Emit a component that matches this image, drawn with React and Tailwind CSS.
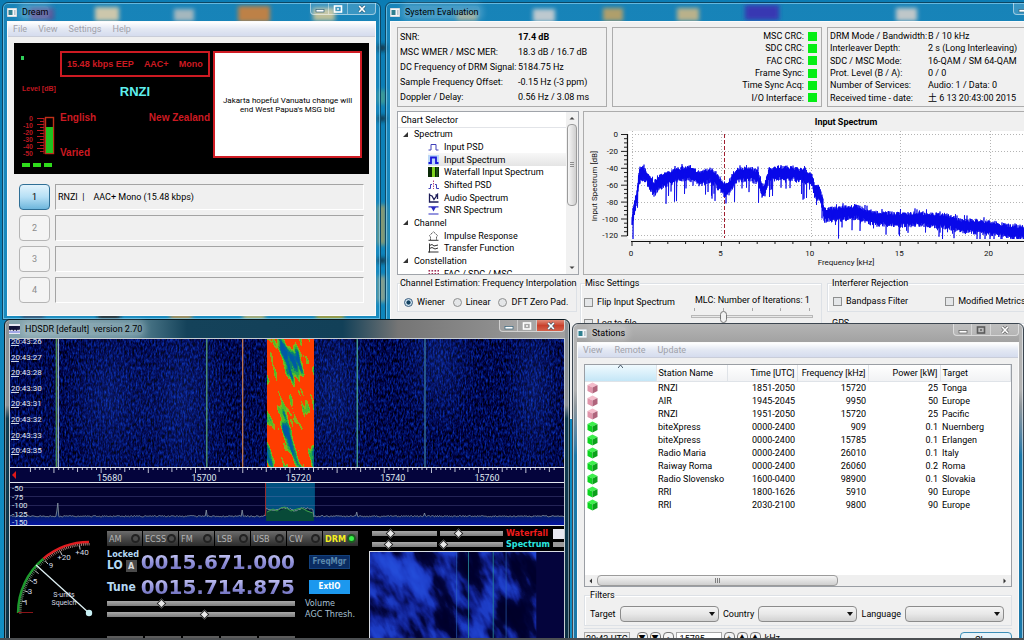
import React from "react";
import clsx from "clsx";

// small seeded generator so the traces look the same on every load
const makeRandom = (seed) => {
  let s = seed;
  return () => {
    s = (s * 16807) % 2147483647;
    return s / 2147483647;
  };
};

/* ---------- shared window parts ---------- */

const AppIcon = () => (
  <svg viewBox="0 0 10 9" className="h-[9px] w-[10px] shrink-0" aria-hidden="true">
    <rect width="10" height="9" fill="#f4f6f8" stroke="#8a9aa5" strokeWidth="0.6" />
    <rect x="1.5" y="2" width="4" height="5" fill="#2f7f8f" />
    <rect x="7" y="2" width="1.6" height="5" fill="#b9c4cc" />
  </svg>
);

const HdsdrIcon = () => (
  <svg viewBox="0 0 11 10" className="h-[10px] w-[11px] shrink-0" aria-hidden="true">
    <rect width="11" height="10" fill="#e8e8f4" />
    <path d="M0 2H11V5L10 6.5L9 5.5L7.5 7L6 5.5L4.5 7L3 5.5L1.5 6.5L0 5.5Z" fill="#12123a" />
    <rect y="7.5" width="11" height="1" fill="#5a64d8" />
  </svg>
);

const CaptionButtons = ({ tone = "light", red }) => {
  const stroke = tone === "light" ? "#ffffff" : "#5b5b5b";
  const cell = "flex h-[11px] items-center justify-center border-r border-white/40 last:border-r-0";
  return (
    <div className="flex shrink-0 overflow-hidden rounded-b border border-t-0 border-white/50 bg-white/15">
      <button aria-label="Minimize" className={clsx(cell, "w-[18px]")}>
        <svg viewBox="0 0 10 8" className="h-2 w-2.5">
          <rect x="1" y="4.5" width="8" height="2.5" fill="#fff" stroke={tone === "light" ? "#33617a" : stroke} strokeWidth="0.7" />
        </svg>
      </button>
      <button aria-label="Maximize" className={clsx(cell, "w-[19px]")}>
        <svg viewBox="0 0 10 8" className="h-2 w-2.5">
          <rect x="1.5" y="1" width="7" height="6" fill="none" stroke={stroke} strokeWidth="1.6" />
          <rect x="4" y="3.3" width="2" height="1.4" fill={stroke} />
        </svg>
      </button>
      <button
        aria-label="Close"
        className={clsx(cell, "w-[27px]", red && "bg-gradient-to-b from-[#e08a78] via-[#c8402c] to-[#d4604a]")}
      >
        <svg viewBox="0 0 10 8" className="h-2 w-2.5">
          <path d="M2.2 1 L7.8 7 M7.8 1 L2.2 7" stroke={tone === "light" ? "#33617a" : stroke} strokeWidth="2.8" />
          <path d="M2.2 1 L7.8 7 M7.8 1 L2.2 7" stroke="#fff" strokeWidth="1.7" />
        </svg>
      </button>
    </div>
  );
};

const TitleBar = ({ icon, title, tone, red }) => (
  <div className="flex h-[18px] shrink-0 items-start justify-between">
    <div className="flex h-full items-center gap-[4px] text-[9px] text-black">
      {icon}
      <span className="whitespace-pre rounded bg-white/20 px-px shadow-[0_0_6px_3px_rgba(255,255,255,0.2)]">{title}</span>
    </div>
    <CaptionButtons tone={tone} red={red} />
  </div>
);

const MenuBar = ({ items, className }) => (
  <nav className={clsx("flex h-[15px] items-center border-b border-[#c9cdd9] bg-gradient-to-b from-white via-[#e3e8f3] to-[#d5dcee] pl-[5px] text-[#a0a2aa]", className)}>
    {items.map((item) => (
      <button key={item}>{item}</button>
    ))}
  </nav>
);

/* ---------- desktop ---------- */

const wallpaperIcons = [
  [30, 8, 24, 12, "#3b3f8a"], [95, 7, 24, 14, "#c9c4a8"], [174, 9, 20, 12, "#9fb3bb"],
  [238, 6, 32, 16, "#b97a3c"], [313, 8, 22, 13, "#b9bc94"], [457, 12, 20, 9, "#7f9a8c"],
  [533, 9, 22, 13, "#b9c6cc"], [603, 8, 20, 13, "#ab9a63"], [677, 8, 22, 13, "#b5ad85"],
  [745, 5, 34, 15, "#2e2fae"], [896, 8, 21, 13, "#bcc4c6"],
  [22, 314, 22, 6, "#2a4a6a"], [98, 314, 22, 6, "#141414"], [170, 314, 22, 6, "#b08a48"],
  [243, 314, 22, 6, "#b9b06a"], [316, 314, 28, 6, "#a89a2c"],
  [378, 45, 8, 6, "#17323f"], [378, 90, 8, 14, "#3f9a95"], [378, 116, 8, 5, "#17323f"],
  [378, 205, 8, 40, "#8b9a70"], [378, 258, 8, 5, "#17323f"], [378, 276, 8, 26, "#8aa08c"],
];

const Wallpaper = () => (
  <svg className="absolute inset-0 h-full w-full" aria-hidden="true">
    <defs>
      <filter id="soft"><feGaussianBlur stdDeviation="2" /></filter>
    </defs>
    <g filter="url(#soft)">
      {wallpaperIcons.map(([x, y, w, h, fill]) => (
        <rect key={`${x}-${y}`} x={x} y={y} width={w} height={h} fill={fill} />
      ))}
    </g>
  </svg>
);

/* ---------- Dream ---------- */

const LevelMeter = () => (
  <svg viewBox="0 0 46 131" className="h-[131px] w-[46px] shrink-0" aria-label="Level">
    <rect x="7" y="13" width="3" height="4" fill="#2fd05a" />
    <text x="8" y="48" fontSize="7" fontWeight="700" fill="#c01820">Level [dB]</text>
    {[0, -10, -20, -30, -40, -50].map((v, i) => (
      <text key={v} x="19" y={78 + i * 7} fontSize="7" textAnchor="end" fill="#b81820">{v}</text>
    ))}
    {Array.from({ length: 12 }, (_, i) => (
      <path key={i} d={`M${i % 2 ? 26 : 23} ${75.5 + i * 3}H30`} stroke="#b81820" />
    ))}
    <path d="M30 75V111" stroke="#b81820" />
    <rect x="31.5" y="74.5" width="8" height="36" fill="none" stroke="#c03018" strokeWidth="1.4" />
    <rect x="32" y="84" width="7" height="26" fill="#1fc01f" />
    {[8, 19, 30].map((x) => (
      <rect key={x} x={x} y="120" width="8" height="4" fill="#2fdc1c" />
    ))}
  </svg>
);

const services = ["RNZI  |    AAC+ Mono (15.48 kbps)", "", "", ""];

const DreamWindow = () => (
  <section className="absolute top-[2px] left-[2px] w-[379px] rounded-t-md border border-[#0d4663] bg-white/5 px-[4px] pb-[3px] shadow-[inset_0_0_0_1px_rgba(150,220,250,0.6)]">
    <TitleBar icon={<AppIcon />} title="Dream" />
    <div className="border border-white/70 bg-[#f0f0f0]">
      <MenuBar items={["File", "View", "Settings", "Help"]} className="gap-[11px]" />
      <div className="px-[6px] pt-[6px] pb-[12px]">
        <div className="flex h-[131px] bg-black font-bold text-[#cc1a22] [font-family:'Liberation_Sans',Arial,sans-serif]">
          <LevelMeter />
          <div className="flex w-[150px] flex-col pt-2 text-[10px]">
            <div className="flex h-[26px] items-center justify-around border-2 border-[#cc1a22] text-[9px] whitespace-nowrap">
              <span>15.48 kbps EEP</span>
              <span>AAC+</span>
              <span>Mono</span>
            </div>
            <h1 className="text-center text-[13px] leading-[30px] text-[#5ff0ee]">RNZI</h1>
            <div className="flex justify-between leading-[22px]">
              <span>English</span>
              <span>New Zealand</span>
            </div>
            <span className="mt-[18px] leading-3">Varied</span>
          </div>
          <div className="my-2 ml-[3px] flex h-[107px] w-[149px] items-center justify-center border-2 border-[#d01c24] bg-white text-center text-[8px] leading-[9px] font-normal whitespace-nowrap text-black [font-family:Roboto,sans-serif]">
            <p>
              Jakarta hopeful Vanuatu change will
              <br />
              end West Papua's MSG bid
            </p>
          </div>
        </div>
        <ul className="mt-[10px] flex flex-col gap-[5px] pr-[5px] pl-[5px]">
          {services.map((text, i) => (
            <li key={i} className="flex h-[26px] gap-[5px]">
              <button
                className={clsx(
                  "w-[31px] rounded-sm border",
                  i === 0
                    ? "border-[#2f6f96] bg-gradient-to-b from-[#e2f3fc] via-[#b5dff5] to-[#6db6dc] text-black"
                    : "border-[#b5b5b5] bg-[#f4f4f4] text-[#8c8c8c]"
                )}
              >
                {i + 1}
              </button>
              <div className="flex flex-1 items-center border border-t-[#a4a4a4] border-r-white border-b-white border-l-[#a4a4a4] pl-[2px] whitespace-pre text-black">
                {text}
              </div>
            </li>
          ))}
        </ul>
      </div>
    </div>
  </section>
);

/* ---------- System Evaluation ---------- */

const signalStats = [
  ["SNR:", "17.4 dB"],
  ["MSC WMER / MSC MER:", "18.3 dB / 16.7 dB"],
  ["DC Frequency of DRM Signal:", "5184.75 Hz"],
  ["Sample Frequency Offset:", "-0.15 Hz (-3 ppm)"],
  ["Doppler / Delay:", "0.56 Hz / 3.08 ms"],
];
const leds = ["MSC CRC:", "SDC CRC:", "FAC CRC:", "Frame Sync:", "Time Sync Acq:", "I/O Interface:"];
const modeStats = [
  ["DRM Mode / Bandwidth:", "B / 10 kHz"],
  ["Interleaver Depth:", "2 s (Long Interleaving)"],
  ["SDC / MSC Mode:", "16-QAM / SM 64-QAM"],
  ["Prot. Level (B / A):", "0 / 0"],
  ["Number of Services:", "Audio: 1 / Data: 0"],
  ["Received time - date:", "土 6 13 20:43:00 2015"],
];

const treeIcons = {
  psd: <path d="M0.5 8H3V2.5H8V8H10.5" fill="none" stroke="#4040b8" strokeWidth="1" />,
  spectrum: (
    <>
      <rect width="11" height="10" fill="#bcd8f8" />
      <path d="M0.5 8H3V2.5H8V8H10.5" fill="none" stroke="#1818d8" strokeWidth="1.8" />
    </>
  ),
  waterfall: (
    <>
      <rect width="11" height="10" fill="#0a2a08" />
      <rect x="4" width="3" height="10" fill="#7fd420" />
      <rect x="8.5" width="1" height="10" fill="#2c7a18" />
    </>
  ),
  shifted: (
    <>
      <path d="M0.5 8.5H2.5V4.5H4M7 4.5H8.5V8.5H11" fill="none" stroke="#4040b8" />
      <path d="M5.5 0.5V9" stroke="#b04080" strokeDasharray="1.5 1" />
    </>
  ),
  audio: <path d="M1.5 0.5V9H10.5M1.5 2L4 3L6 6.5L9.5 1.5V6M7.5 2H9.5" fill="none" stroke="#1c1c58" strokeWidth="1.3" />,
  snr: (
    <>
      <path d="M0.5 1.8H10.5M0.5 9H10.5" stroke="#2c2cc0" strokeWidth="1.2" />
      <path d="M3 2L5.5 6.5L8 2Z" fill="#2c2cc0" />
    </>
  ),
  impulse: (
    <>
      <path d="M0.5 9.3H10.5" stroke="#333" />
      <path d="M2.5 9V6L1.5 4.5L5.5 0.8L9.5 4.5L8.5 6V9" fill="none" stroke="#555" strokeDasharray="1.6 0.6" />
    </>
  ),
  transfer: <path d="M1.5 0.5V9.5M0 9H10.5M1.5 2.5L4 1.5L6 3L10 2M1.5 5.5L4 4.5L7 6L10 5" fill="none" stroke="#333" />,
  msc: (
    <g fill="#a03058">
      {[0, 3, 6, 9].map((x) => [0, 3, 6].map((y) => <rect key={`${x}${y}`} x={x + 0.5} y={y + 1} width="1.6" height="1.6" />))}
    </g>
  ),
};

const tree = [
  { label: "Spectrum" },
  { label: "Input PSD", icon: "psd" },
  { label: "Input Spectrum", icon: "spectrum", selected: true },
  { label: "Waterfall Input Spectrum", icon: "waterfall" },
  { label: "Shifted PSD", icon: "shifted" },
  { label: "Audio Spectrum", icon: "audio" },
  { label: "SNR Spectrum", icon: "snr" },
  { label: "Channel" },
  { label: "Impulse Response", icon: "impulse" },
  { label: "Transfer Function", icon: "transfer" },
  { label: "Constellation" },
  { label: "FAC / SDC / MSC", icon: "msc" },
];

const ChartSelector = () => (
  <div className="flex w-[182px] shrink-0 overflow-hidden border border-[#a0a4aa] bg-white">
    <div className="min-w-0 flex-1">
      <h2 className="h-[16px] border-b border-[#e2e4e8] pl-[3px] leading-[16px]">Chart Selector</h2>
      <ul className="grid h-[152px] grid-rows-12">
        {tree.map(({ label, icon, selected }) =>
          icon ? (
            <li key={label} className="pl-[30px]">
              <button className={clsx("flex h-full w-full items-center gap-[5px] whitespace-nowrap", selected && "bg-gradient-to-b from-[#f8f8f8] to-[#e4e4e4]")}>
                <svg viewBox="0 0 11 10" className="h-[10px] w-[11px] shrink-0">{treeIcons[icon]}</svg>
                {label}
              </button>
            </li>
          ) : (
            <li key={label} className="flex items-center gap-[6px] pl-[5px]">
              <svg viewBox="0 0 5 5" className="h-[5px] w-[5px]"><path d="M5 0V5H0Z" fill="#333" /></svg>
              {label}
            </li>
          )
        )}
      </ul>
    </div>
    <div className="flex w-[12px] flex-col items-center bg-[#f1f1f1]">
      <svg viewBox="0 0 12 12" className="h-3 w-3"><path d="M3.5 7.5L6 5L8.5 7.5Z" fill="#444" /></svg>
      <div className="flex h-[82px] w-[10px] items-center justify-center rounded-sm border border-[#9b9b9b] bg-gradient-to-r from-[#f6f6f6] to-[#cfcfcf]">
        <svg viewBox="0 0 6 6" className="h-1.5 w-1.5"><path d="M1 0.5H5M1 2.5H5M1 4.5H5" stroke="#777" strokeWidth="0.8" /></svg>
      </div>
      <svg viewBox="0 0 12 12" className="mt-auto h-3 w-3"><path d="M3.5 4.5L6 7L8.5 4.5Z" fill="#444" /></svg>
    </div>
  </div>
);

// [x, y] centre line of the spectrum in chart pixels
const envelope = [
  [48, 108], [50, 98], [53, 84], [55, 64], [58, 60], [62, 63], [66, 71], [70, 76], [76, 69], [84, 66], [92, 62],
  [104, 60], [116, 66], [126, 62], [132, 66], [138, 74], [141, 77], [146, 73], [152, 63], [165, 61], [174, 64],
  [178, 78], [181, 77], [185, 62], [196, 60], [210, 61], [222, 64], [228, 66], [231, 80], [235, 80], [238, 88],
  [240, 102], [256, 101], [272, 99], [287, 105], [316, 107], [337, 106], [365, 109], [376, 113], [396, 114],
  [412, 116], [428, 119], [442, 120], [462, 121],
];

const spectrumPath = (() => {
  const rand = makeRandom(77);
  let d = "";
  let k = 0;
  for (let x = 48; x < 460; x += 0.5) {
    while (k < envelope.length - 2 && envelope[k + 1][0] < x) k += 1;
    const [x0, y0] = envelope[k];
    const [x1, y1] = envelope[k + 1];
    const mid = y0 + ((y1 - y0) * (x - x0)) / (x1 - x0);
    const up = mid - 3 - rand() * 4 - (rand() > 0.93 ? 3 : 0);
    const down = mid + 4 + rand() * 5 + (rand() > 0.9 ? rand() * 20 : 0);
    d += `${d ? "L" : "M"}${x} ${up.toFixed(1)}L${x} ${Math.min(down, 127).toFixed(1)}`;
  }
  return d;
})();

const InputSpectrumChart = () => (
  <svg viewBox="0 0 460 162" className="h-[162px] w-[460px] [font-family:Roboto,sans-serif]">
    <rect x="44" y="19" width="416" height="108" fill="#fff" />
    <g stroke="#b4b4b4" strokeDasharray="1 2">
      {Array.from({ length: 7 }, (_, i) => <path key={i} d={`M48 ${Math.round(22 + i * 16.9) + 0.5}H460`} />)}
      {Array.from({ length: 5 }, (_, i) => <path key={i} d={`M${Math.round(48 + i * 89.4) + 0.5} 19V127`} />)}
    </g>
    <path d="M140.500 22V126" stroke="#a02030" strokeDasharray="4 2" />
    <path d={spectrumPath} fill="none" stroke="#0808e8" strokeWidth="0.8" />
    <path d="M43.500 22V124M47 129.500H460" stroke="#111" strokeWidth="1.2" fill="none" />
    <g stroke="#222">
      {Array.from({ length: 25 }, (_, i) => (
        <path key={i} d={`M${i % 4 === 0 ? 37 : 40} ${(22.5 + i * 4.225).toFixed(1)}H43`} />
      ))}
      {Array.from({ length: 23 }, (_, i) => (
        <path key={i} d={`M${(48 + i * 17.88).toFixed(1)} 130V${i % 5 === 0 ? 134 : 132}`} />
      ))}
    </g>
    <g fontSize="8" fill="#111">
      {[0, -20, -40, -60, -80, -100, -120].map((v, i) => (
        <text key={v} x="34" y={25 + i * 16.9} textAnchor="end">{v}</text>
      ))}
      {[0, 5, 10, 15, 20].map((v, i) => (
        <text key={v} x={47 + i * 89.4} y="144" textAnchor="middle">{v}</text>
      ))}
      <text x="262" y="153" textAnchor="middle">Frequency [kHz]</text>
      <text transform="translate(13 74) rotate(-90)" textAnchor="middle">Input Spectrum [dB]</text>
    </g>
    <text x="262" y="13" fontSize="9" fontWeight="700" textAnchor="middle">Input Spectrum</text>
  </svg>
);

const checkBox = "h-[9px] w-[9px] appearance-none border border-[#8e8f8f] bg-[#e4e6e8]";
const Check = ({ label, className }) => (
  <label className={clsx("flex items-center gap-[4px] whitespace-nowrap", className)}>
    <input type="checkbox" className={checkBox} />
    {label}
  </label>
);

const group = "min-w-0 border border-[#dde1e6] shadow-[inset_1px_1px_0_white]";
const panel = "shrink-0 border border-[#acacac]";

const SystemEvaluationWindow = () => (
  <section className="absolute top-[2px] -right-[60px] left-[385px] h-[400px] rounded-t-md border border-[#0d4663] bg-white/5 px-[4px] shadow-[inset_0_0_0_1px_rgba(150,220,250,0.6)]">
    <TitleBar icon={<AppIcon />} title="System Evaluation" />
    <div className="h-full border border-white/70 bg-[#f0f0f0] pt-[5px] pl-[6px] text-black">
      <div className="flex h-[80px] gap-[5px]">
        <dl className={clsx(panel, "grid w-[210px] grid-cols-[118px_1fr] grid-rows-5 items-center px-[2px] py-px whitespace-nowrap")}>
          {signalStats.map(([name, value], i) => (
            <React.Fragment key={name}>
              <dt>{name}</dt>
              <dd className={clsx(i === 0 && "font-bold")}>{value}</dd>
            </React.Fragment>
          ))}
        </dl>
        <ul className={clsx(panel, "grid w-[210px] grid-rows-6 px-[4px] py-[2px] text-right")}>
          {leds.map((name) => (
            <li key={name} className="flex items-center justify-end gap-[4px]">
              {name}
              <span className="h-[9px] w-[9px] bg-[#04ee14]" />
            </li>
          ))}
        </ul>
        <dl className={clsx(panel, "grid w-[240px] grid-cols-[98px_1fr] grid-rows-6 items-center px-[2px] py-[2px] whitespace-nowrap")}>
          {modeStats.map(([name, value]) => (
            <React.Fragment key={name}>
              <dt>{name}</dt>
              <dd>{value}</dd>
            </React.Fragment>
          ))}
        </dl>
      </div>
      <div className="mt-[4px] flex h-[164px] gap-[4px]">
        <ChartSelector />
        <div className="min-w-0 flex-1 overflow-hidden border border-r-0 border-[#acacac]">
          <InputSpectrumChart />
        </div>
      </div>
      <div className="mt-[2px] flex items-start gap-[3px]">
        <fieldset className={clsx(group, "h-[35px] w-[180px]")}>
          <legend className="ml-[2px] leading-3 whitespace-nowrap">Channel Estimation: Frequency Interpolation</legend>
          <div className="flex items-center gap-[8px] pt-[7px] pl-[6px]">
            {["Wiener", "Linear", "DFT Zero Pad."].map((label, i) => (
              <label key={label} className="flex items-center gap-[4px] leading-3 whitespace-nowrap">
                <input
                  type="radio"
                  name="interpolation"
                  defaultChecked={i === 0}
                  className="h-[9px] w-[9px] appearance-none rounded-full border border-[#8e8f8f] bg-[#e4e6e8] checked:border-[#3b5f80] checked:bg-[radial-gradient(#12405f_35%,#cfe3f0_50%)]"
                />
                {label}
              </label>
            ))}
          </div>
        </fieldset>
        <fieldset className={clsx(group, "h-[80px] w-[242px]")}>
          <legend className="ml-[4px] leading-3">Misc Settings</legend>
          <div className="flex justify-between pr-[8px] pl-[3px]">
            <div className="flex flex-col gap-[9px] pt-[7px] leading-3">
              <Check label="Flip Input Spectrum" />
              <Check label="Log to file" />
            </div>
            <div className="w-[122px] pt-[5px] leading-3">
              <label htmlFor="mlc" className="block pl-[4px] whitespace-nowrap">MLC: Number of Iterations: 1</label>
              <div className="mt-[2px] flex h-[3px] justify-between px-[3px]">
                {[0, 1, 2, 3, 4].map((t) => <span key={t} className="w-px bg-[#a8a8a8]" />)}
              </div>
              <input
                id="mlc"
                type="range"
                min="0"
                max="4"
                defaultValue="1"
                className="mt-[4px] block h-[3px] w-full appearance-none border border-[#b8b8b8] bg-[#e8e8e8] [&::-webkit-slider-thumb]:h-[12px] [&::-webkit-slider-thumb]:w-[7px] [&::-webkit-slider-thumb]:appearance-none [&::-webkit-slider-thumb]:rounded-sm [&::-webkit-slider-thumb]:border [&::-webkit-slider-thumb]:border-[#777] [&::-webkit-slider-thumb]:bg-[#f2f2f2]"
              />
            </div>
          </div>
        </fieldset>
        <div className="w-[240px] pl-[2px]">
          <fieldset className={clsx(group, "h-[35px]")}>
            <legend className="ml-[4px] leading-3">Interferer Rejection</legend>
            <div className="flex gap-[37px] pt-[6px] pl-[5px] leading-3">
              <Check label="Bandpass Filter" />
              <Check label="Modified Metrics" />
            </div>
          </fieldset>
          <fieldset className={clsx(group, "mt-[5px] h-[40px]")}>
            <legend className="ml-[4px] leading-3">GPS</legend>
          </fieldset>
        </div>
      </div>
    </div>
  </section>
);

/* ---------- HDSDR ---------- */

const NoiseFilters = () => (
  <defs>
    <filter id="noise" x="0" y="0" width="1" height="1" colorInterpolationFilters="sRGB">
      <feTurbulence type="fractalNoise" baseFrequency="0.6 0.25" numOctaves="2" seed="4" />
      <feColorMatrix values="0.1 0 0 0 -0.05  0.45 0 0 0 -0.19  1.1 0 0 0 -0.23  0 0 0 0 1" />
    </filter>
    <filter id="fading" x="0" y="0" width="1" height="1" colorInterpolationFilters="sRGB">
      <feTurbulence type="fractalNoise" baseFrequency="0.11 0.026" numOctaves="3" seed="23" />
      <feColorMatrix values="1 0 0 0 0  1 0 0 0 0  1 0 0 0 0  0 0 0 0 1" />
      <feComponentTransfer>
        <feFuncR type="discrete" tableValues="0 0 0 0 0 0 0 0 .05 .15 .3 .55 1 1 1 1 1 1 1 1 1 1 1 1 1" />
        <feFuncG type="discrete" tableValues=".35 .35 .35 .35 .35 .35 .35 .4 .5 .66 .74 .68 .24 .24 .24 .24 .24 .24 .24 .24 .24 .24 .24 .24 .24" />
        <feFuncB type="discrete" tableValues=".65 .65 .65 .65 .65 .65 .65 .6 .45 .3 .18 .1 0 0 0 0 0 0 0 0 0 0 0 0 0" />
      </feComponentTransfer>
    </filter>
    <filter id="clouds" x="0" y="0" width="1" height="1" colorInterpolationFilters="sRGB">
      <feTurbulence type="fractalNoise" baseFrequency="0.045 0.022" numOctaves="4" seed="8" />
      <feColorMatrix values="1 0 0 0 0  1 0 0 0 0  1 0 0 0 0  0 0 0 0 1" />
      <feComponentTransfer>
        <feFuncR type="table" tableValues="0 0 0 0 .01 .06 .11 .13 .14 .15 .15" />
        <feFuncG type="table" tableValues="0 0 0 0 .02 .12 .23 .27 .3 .3 .3" />
        <feFuncB type="table" tableValues=".16 .16 .16 .18 .24 .55 .76 .82 .85 .85 .85" />
      </feComponentTransfer>
    </filter>
    <radialGradient id="glow">
      <stop offset="0" stopColor="#2858d8" stopOpacity="0.24" />
      <stop offset="1" stopColor="#2050d0" stopOpacity="0" />
    </radialGradient>
  </defs>
);

const times = ["20:43:26", "20:43:27", "20:43:28", "20:43:30", "20:43:31", "20:43:32", "20:43:33", "20:43:35"];
const carriers = [[46, "#4f9858"], [48, "#a9b8c8"], [197, "#58a070"], [233, "#c07850"], [348, "#4aa890"], [416, "#3a7ca0"]];

const Waterfall = () => (
  <svg viewBox="0 0 556 128" preserveAspectRatio="none" className="block h-[128px] w-full [font-family:Roboto,sans-serif]">
    <NoiseFilters />
    <rect width="556" height="128" filter="url(#noise)" />
    <ellipse cx="172" cy="60" rx="50" ry="110" fill="url(#glow)" />
    <ellipse cx="100" cy="60" rx="50" ry="90" fill="url(#glow)" />
    <ellipse cx="325" cy="50" rx="40" ry="90" fill="url(#glow)" />
    <ellipse cx="430" cy="20" rx="40" ry="80" fill="url(#glow)" />
    <ellipse cx="525" cy="50" rx="30" ry="90" fill="url(#glow)" />
    {carriers.map(([x, stroke]) => (
      <path key={x} d={`M${x}.5 0V128`} stroke={stroke} strokeWidth="1.3" />
    ))}
    <svg x="258" width="47" height="128" viewBox="0 0 47 128">
      <g transform="skewX(16)">
        <rect x="-40" width="100" height="128" filter="url(#fading)" />
      </g>
    </svg>
    <g fontSize="8" fill="#e8ecf4">
      {times.map((t, i) => (
        <g key={t}>
          <text x="1" y={5 + i * 15.6}>{t}</text>
          <path d={`M1 ${Math.round(6 + i * 15.6) + 0.5}H9`} stroke="#cfd6e4" />
        </g>
      ))}
    </g>
  </svg>
);

const FrequencyScale = () => (
  <svg viewBox="0 0 556 16" preserveAspectRatio="none" className="block h-[16px] w-full [font-family:Roboto,sans-serif]">
    <rect width="556" height="16" fill="#04043c" />
    <path d="M0 0.5H556M0 15.5H556" stroke="#e4e8f0" />
    {Array.from({ length: 112 }, (_, i) => {
      const k = i - 15;
      const h = k % 10 === 0 ? 5 : k % 5 === 0 ? 4 : 2;
      return <path key={i} d={`M${(91.5 + k * 4.735).toFixed(1)} 1V${1 + h}`} stroke="#d4d8e4" strokeWidth="0.9" />;
    })}
    <path d="M6 4V12L2 8Z" fill="#e01818" />
    {[15680, 15700, 15720, 15740, 15760].map((f, i) => (
      <text key={f} x={100 + i * 94.7} y="14" fontSize="9" textAnchor="middle" fill="#dfe4ee">{f}</text>
    ))}
  </svg>
);

const noiseFloor = (() => {
  const rand = makeRandom(9);
  const peaks = { 48: 20, 47: 28, 197: 27, 233: 27, 348: 29, 416: 30 };
  let d = "M0 33";
  for (let x = 1; x <= 556; x += 1) {
    let y = peaks[x] ?? 32.5 + rand() * 1.4;
    if (x > 256 && x < 305) y = 29 - Math.abs(Math.sin(x / 7)) * 3 - rand() * 2;
    d += `L${x} ${y.toFixed(1)}`;
  }
  return d;
})();

const RfSpectrum = () => (
  <svg viewBox="0 0 556 43" preserveAspectRatio="none" className="block h-[43px] w-full [font-family:Roboto,sans-serif]">
    <defs>
      <linearGradient id="floor" x1="0" y1="0" x2="0" y2="1">
        <stop offset="0.3" stopColor="#04203c" />
        <stop offset="1" stopColor="#0414a8" />
      </linearGradient>
    </defs>
    <rect width="556" height="43" fill="#02022e" />
    <rect x="256" width="50" height="42" fill="#00507f" />
    {[4, 13, 22].map((y) => <path key={y} d={`M0 ${y}.5H556`} stroke="#8080c0" strokeOpacity="0.28" />)}
    <path d={`${noiseFloor}V43H0Z`} fill="url(#floor)" />
    <path d="M257 38V29L264 27L270 28L277 25L284 28L290 26L297 26L305 31V38Z" fill="#084a38" />
    <path d={noiseFloor} fill="none" stroke="#8c98a4" strokeWidth="0.8" />
    <path d="M258 29L264 26L268 28L272 25L276 24L282 28L288 26L293 25L298 28L304 30" fill="none" stroke="#3fa04a" />
    <path d="M256.500 0V33" stroke="#a02828" />
    <path d="M0 42.500H556" stroke="#dfe4f0" />
    <g fontSize="8" fill="#dfe4ee">
      {[-50, -75, -100, -125, -150].map((v, i) => <text key={v} x="2" y={8 + i * 8.6}>{v}</text>)}
    </g>
  </svg>
);

const SMeter = () => {
  const ticks = Array.from({ length: 58 }, (_, i) => i);
  const at = (deg, r) => {
    const a = (deg * Math.PI) / 180;
    return `${(79 - Math.cos(a) * r).toFixed(1)} ${(87 - Math.sin(a) * r).toFixed(1)}`;
  };
  return (
    <svg viewBox="0 0 97 112" className="h-[112px] w-[97px] shrink-0 [font-family:Roboto,sans-serif]" aria-label="S-meter">
      <path d={`M${at(0, 71)}A71 71 0 0 1 ${at(50, 71)}`} fill="none" stroke="#1c9a2c" strokeWidth="2.4" />
      <path d={`M${at(50, 71)}A71 71 0 0 1 ${at(90, 71)}`} fill="none" stroke="#e01c20" strokeWidth="2.4" />
      {ticks.map((i) => (
        <path key={i} d={`M${at(i * 1.58, 70)}L${at(i * 1.58, 67.5)}`} stroke={i < 32 ? "#8ab890" : "#f0b0a8"} strokeWidth="0.7" />
      ))}
      {[10, 19, 29, 38, 50, 65, 82].map((a) => (
        <path key={a} d={`M${at(a, 68)}L${at(a, 64)}`} stroke="#ddd" strokeWidth="0.9" />
      ))}
      <path d="M8 86.500H23" stroke="#8a1418" />
      <g fontSize="8" fill="#d4dae2" textAnchor="middle">
        <text x="16" y="79">1</text>
        <text x="20" y="68">3</text>
        <text x="25" y="58">5</text>
        <text x="41" y="42">9</text>
        <text x="54" y="34">+20</text>
        <text x="72" y="29">+40</text>
        <text x="54" y="71" fontSize="7">S-units</text>
        <text x="54" y="79" fontSize="7">Squelch</text>
      </g>
      <path d="M26 39L79 87" stroke="#dff0f4" strokeWidth="1.3" />
      <circle cx="79" cy="87" r="3.2" fill="#c8f0f4" />
    </svg>
  );
};

const Slider = ({ label, value, className }) => (
  <input
    type="range"
    aria-label={label}
    defaultValue={value}
    className={clsx(
      "block h-[5px] min-w-0 appearance-none bg-gradient-to-b from-[#a8a8a8] to-[#7c7c7c] [&::-webkit-slider-thumb]:h-[7px] [&::-webkit-slider-thumb]:w-[7px] [&::-webkit-slider-thumb]:rotate-45 [&::-webkit-slider-thumb]:appearance-none [&::-webkit-slider-thumb]:border [&::-webkit-slider-thumb]:border-[#222] [&::-webkit-slider-thumb]:bg-[#e8e8e8]",
      className
    )}
  />
);

const digits = "bg-gradient-to-b from-[#d0d0f6] via-[#9494dc] to-[#6a6ab8] bg-clip-text text-[20px] leading-[20px] font-bold text-transparent [font-family:'DejaVu_Sans',sans-serif]";
const modes = ["AM", "ECSS", "FM", "LSB", "USB", "CW", "DRM"];

const HdsdrWindow = () => (
  <section className="absolute top-[319px] left-[4px] flex h-[330px] w-[566px] flex-col rounded-t-md border border-[#0a1a22] bg-[linear-gradient(180deg,#8c9296_0%,#8c9296_26%,#123c50_30%,#0c3044_100%)] px-[4px] shadow-[inset_0_0_0_1px_rgba(220,230,235,0.5)]">
    <div className="bg-[linear-gradient(90deg,#85a4ae_0%,#5c8796_22%,#14425a_32%,#124058_60%,#757575_70%,#a0a0a0_100%)]">
      <TitleBar icon={<HdsdrIcon />} title="HDSDR [default]  version 2.70" red />
    </div>
    <div className="min-h-0 flex-1 border border-[#c5ccd0] border-b-0 bg-black">
      <Waterfall />
      <FrequencyScale />
      <RfSpectrum />
      <div className="flex [font-family:'DejaVu_Sans_Condensed','DejaVu_Sans',sans-serif]">
        <SMeter />
        <div className="flex w-[252px] flex-col pt-[5px]">
          <div className="grid h-[15px] grid-cols-7">
            {modes.map((mode) => (
              <button
                key={mode}
                className={clsx(
                  "flex items-center justify-between border-r border-black bg-gradient-to-b from-[#6c6c6c] via-[#4a4a4a] to-[#2c2c2c] pr-[2px] pl-[2px] text-[9px]",
                  mode === "DRM" ? "font-bold text-[#f4ee20]" : "text-[#b4b4b4]"
                )}
              >
                {mode}
                <span className={clsx("h-[9px] w-[9px] shrink-0 rounded-full border-2", mode === "DRM" ? "border-[#1c5c20] bg-[#38f048]" : "border-[#222] bg-[#4c4c4c]")} />
              </button>
            ))}
          </div>
          <div className="flex justify-between">
            <div className="flex w-[188px] flex-col font-bold text-[#b4d8f4]">
              <div className="flex h-[26px] items-end justify-between">
                <div className="text-[9px] leading-[10px]">
                  Locked
                  <div className="flex items-center gap-[3px] text-[12px] leading-[13px]">
                    LO
                    <button className="h-[12px] w-[11px] bg-[#4a4a4a] text-center text-[9px] leading-[12px] text-[#ddd]">A</button>
                  </div>
                </div>
                <output className={digits}>0015.671.000</output>
              </div>
              <div className="mt-[4px] flex h-[22px] items-center justify-between text-[12px]">
                <span>Tune</span>
                <output className={digits}>0015.714.875</output>
              </div>
              <Slider label="Volume" value={28} className="mt-[3px] w-full" />
              <Slider label="AGC Thresh." value={52} className="mt-[6px] w-full" />
            </div>
            <div className="flex w-[54px] flex-col text-[9px] whitespace-nowrap text-[#a8c0d4]">
              <button className="mt-[9px] ml-[4px] h-[14px] w-[41px] border border-[#12407c] bg-[#0a2c62] text-[8px] font-bold text-[#5a88ac]">FreqMgr</button>
              <button className="mt-[11px] ml-[4px] h-[14px] w-[41px] bg-[#1c98ee] text-[8px] font-bold text-white">ExtIO</button>
              <span className="mt-[4px] leading-[11px]">Volume</span>
              <span className="leading-[11px]">AGC Thresh.</span>
            </div>
          </div>
          <div className="mt-[16px] grid w-[188px] grid-cols-5 gap-[2px]">
            {[0, 1, 2, 3, 4].map((i) => <span key={i} className="h-[6px] bg-[#5c5c5c]" />)}
          </div>
        </div>
        <div className="ml-[10px] flex min-w-0 flex-1 flex-col">
          <div className="mt-[2px] grid grid-cols-[65px_63px_1fr_11px] items-center gap-x-[3px] pl-[3px] text-[9px] leading-[11px] font-bold">
            <Slider label="Waterfall low" value={25} className="w-full" />
            <Slider label="Waterfall high" value={26} className="w-full" />
            <span className="text-[#ee1c1c]">Waterfall</span>
            <span className="h-[10px] bg-[#e8e8f0]" />
            <Slider label="Spectrum low" value={22} className="w-full" />
            <Slider label="Spectrum high" value={0} className="w-full" />
            <span className="text-[#2ce8e0]">Spectrum</span>
            <span className="h-[5px] bg-[#9a9a9a]" />
          </div>
          <svg viewBox="0 0 196 90" className="mt-px block h-[90px] w-full border-t border-l border-[#d8dce4] bg-[#04043c]" preserveAspectRatio="none">
            <svg width="168" height="90" viewBox="0 0 168 90">
              <g transform="skewX(22)">
                <rect x="-60" width="240" height="90" filter="url(#clouds)" />
              </g>
              <path d="M99.500 0V90M124.500 0V90" stroke="#28909c" strokeOpacity="0.8" />
              <path d="M137.500 0V90M87.500 0V90" stroke="#3068c0" strokeOpacity="0.6" />
            </svg>
          </svg>
        </div>
      </div>
    </div>
  </section>
);

/* ---------- Stations ---------- */

const stations = [
  ["RNZI", "1851-2050", "15720", "25", "Tonga", false],
  ["AIR", "1945-2045", "9950", "50", "Europe", false],
  ["RNZI", "1951-2050", "15720", "25", "Pacific", false],
  ["biteXpress", "0000-2400", "909", "0.1", "Nuernberg", true],
  ["biteXpress", "0000-2400", "15785", "0.1", "Erlangen", true],
  ["Radio Maria", "0000-2400", "26010", "0.1", "Italy", true],
  ["Raiway Roma", "0000-2400", "26060", "0.2", "Roma", true],
  ["Radio Slovensko", "1600-0400", "98900", "0.1", "Slovakia", true],
  ["RRI", "1800-1626", "5910", "90", "Europe", true],
  ["RRI", "2030-2100", "9800", "90", "Europe", true],
];

const Cube = ({ active }) => (
  <svg viewBox="0 0 11 12" className="h-[12px] w-[11px]" aria-hidden="true">
    <path d="M5.500 0.500L10.500 3L5.500 5.500L0.500 3Z" fill={active ? "#3cf04c" : "#f4bccb"} />
    <path d="M0.500 3L5.500 5.500V11.500L0.500 9Z" fill={active ? "#0ad41e" : "#e094aa"} />
    <path d="M10.500 3L5.500 5.500V11.500L10.500 9Z" fill={active ? "#0aa01a" : "#b0647c"} />
  </svg>
);

const FilterSelect = ({ label }) => (
  <label className="flex items-center gap-[4px]">
    {label}
    <span className="relative">
      <select className="block h-[16px] w-[99px] appearance-none rounded-sm border border-[#8c8c8c] bg-gradient-to-b from-[#f4f4f4] via-[#e8e8e8] to-[#d2d2d2]">
        <option value="" />
      </select>
      <svg viewBox="0 0 6 4" className="pointer-events-none absolute top-[6px] right-[4px] h-1 w-1.5"><path d="M0 0H6L3 4Z" fill="#111" /></svg>
    </span>
  </label>
);

const smallButton = "h-[12px] w-[11px] rounded-sm border border-[#777] bg-[#f4f4f4] text-[7px] leading-[9px]";

const StationsWindow = () => (
  <section className="absolute top-[323px] left-[572px] flex h-[330px] w-[452px] flex-col rounded-t-md border border-[#3c4650] bg-gradient-to-b from-[#b4b4b4] from-20% via-[#8f979c] via-25% to-[#1a78a8] to-40% px-[4px] shadow-[inset_0_0_0_1px_rgba(240,245,250,0.6)]">
    <div className="bg-gradient-to-b from-[#b4b4b4] to-[#a2a2a2]">
      <TitleBar icon={<AppIcon />} title="Stations" tone="dark" />
    </div>
    <div className="flex min-h-0 flex-1 flex-col border border-white/70 bg-[#f0f0f0] text-black">
      <MenuBar items={["View", "Remote", "Update"]} className="gap-[12px]" />
      <div className="mx-[6px] mt-[6px] flex h-[223px] shrink-0 flex-col border border-[#9a9ea4] bg-white">
        <table className="w-full table-fixed border-collapse">
          <colgroup>
            <col className="w-[71px]" />
            <col className="w-[71px]" />
            <col className="w-[70px]" />
            <col className="w-[71px]" />
            <col className="w-[72px]" />
            <col />
          </colgroup>
          <thead>
            <tr className="h-[16px] bg-gradient-to-b from-white to-[#f1f2f4] [&>th]:border-r [&>th]:border-b [&>th]:border-[#dfe3e8] [&>th]:px-[2px] [&>th]:py-0 [&>th]:font-normal">
              <th className="bg-gradient-to-b from-[#f0fafe] to-[#c4e6f6]">
                <svg viewBox="0 0 5 3" className="mx-auto -mt-[8px] h-[3px] w-[5px]" aria-label="Status"><path d="M0 3L2.500 0L5 3" fill="none" stroke="#456" /></svg>
              </th>
              <th className="text-left">Station Name</th>
              <th className="text-right">Time [UTC]</th>
              <th className="text-right">Frequency [kHz]</th>
              <th className="text-right">Power [kW]</th>
              <th className="text-left">Target</th>
            </tr>
          </thead>
          <tbody>
            {stations.map(([name, time, freq, power, target, active], i) => (
              <tr key={i} className="h-[13px] leading-[12px] [&>td]:px-[2px] [&>td]:py-0">
                <td><Cube active={active} /></td>
                <td>{name}</td>
                <td className="text-right">{time}</td>
                <td className="text-right">{freq}</td>
                <td className="text-right">{power}</td>
                <td>{target}</td>
              </tr>
            ))}
          </tbody>
        </table>
        <div className="mt-auto flex h-[11px] items-center bg-[#efefef]">
          <svg viewBox="0 0 12 10" className="h-2.5 w-3"><path d="M7 2.500V7.500L4.500 5Z" fill="#333" /></svg>
          <div className="flex h-[11px] w-[241px] items-center justify-center rounded-sm border border-[#9b9b9b] bg-gradient-to-b from-[#f4f4f4] to-[#cfcfcf]">
            <svg viewBox="0 0 6 5" className="h-[5px] w-1.5"><path d="M0.500 0V5M2.500 0V5M4.500 0V5" stroke="#666" strokeWidth="0.8" /></svg>
          </div>
          <svg viewBox="0 0 12 10" className="ml-auto h-2.5 w-3"><path d="M4.500 2.500V7.500L7 5Z" fill="#333" /></svg>
        </div>
      </div>
      <fieldset className={clsx(group, "mx-[6px] mt-[2px] h-[37px] shrink-0")}>
        <legend className="ml-[5px] leading-3">Filters</legend>
        <div className="flex items-center justify-between pt-[5px] pr-[7px] pl-[5px] leading-3">
          <FilterSelect label="Target" />
          <FilterSelect label="Country" />
          <FilterSelect label="Language" />
        </div>
      </fieldset>
      <div className="mx-[6px] mt-[2px] flex shrink-0 items-start gap-[2px] border-t border-[#dde1e6] pt-[3px] leading-[12px]">
        <span className="mr-[5px] border border-[#a8a8a8] px-px">20:43 UTC</span>
        <button className={smallButton}>▼</button>
        <button className={smallButton}>▼</button>
        <button className={smallButton}>-</button>
        <input aria-label="Frequency" defaultValue="15785" className="h-[14px] w-[46px] border border-[#a8a8a8] bg-white px-[3px]" />
        <button className={smallButton}>+</button>
        <button className={smallButton}>▲</button>
        <button className={smallButton}>▲</button>
        <span className="ml-[2px]">kHz</span>
        <button className="ml-auto h-[16px] w-[52px] rounded-sm border border-[#3c8fb8] bg-[#e8f4fa]">Close</button>
      </div>
    </div>
  </section>
);

export default function App() {
  return (
    <main className="relative h-screen overflow-hidden bg-gradient-to-b from-[#0b7cb4] to-[#128fc4] text-[9px] leading-[12px] [font-family:Roboto,'Noto_Sans_CJK_JP',sans-serif]">
      <Wallpaper />
      <DreamWindow />
      <SystemEvaluationWindow />
      <HdsdrWindow />
      <StationsWindow />
      <div className="absolute inset-x-0 bottom-0 h-[2px] bg-[#4c4f52]" />
    </main>
  );
}
